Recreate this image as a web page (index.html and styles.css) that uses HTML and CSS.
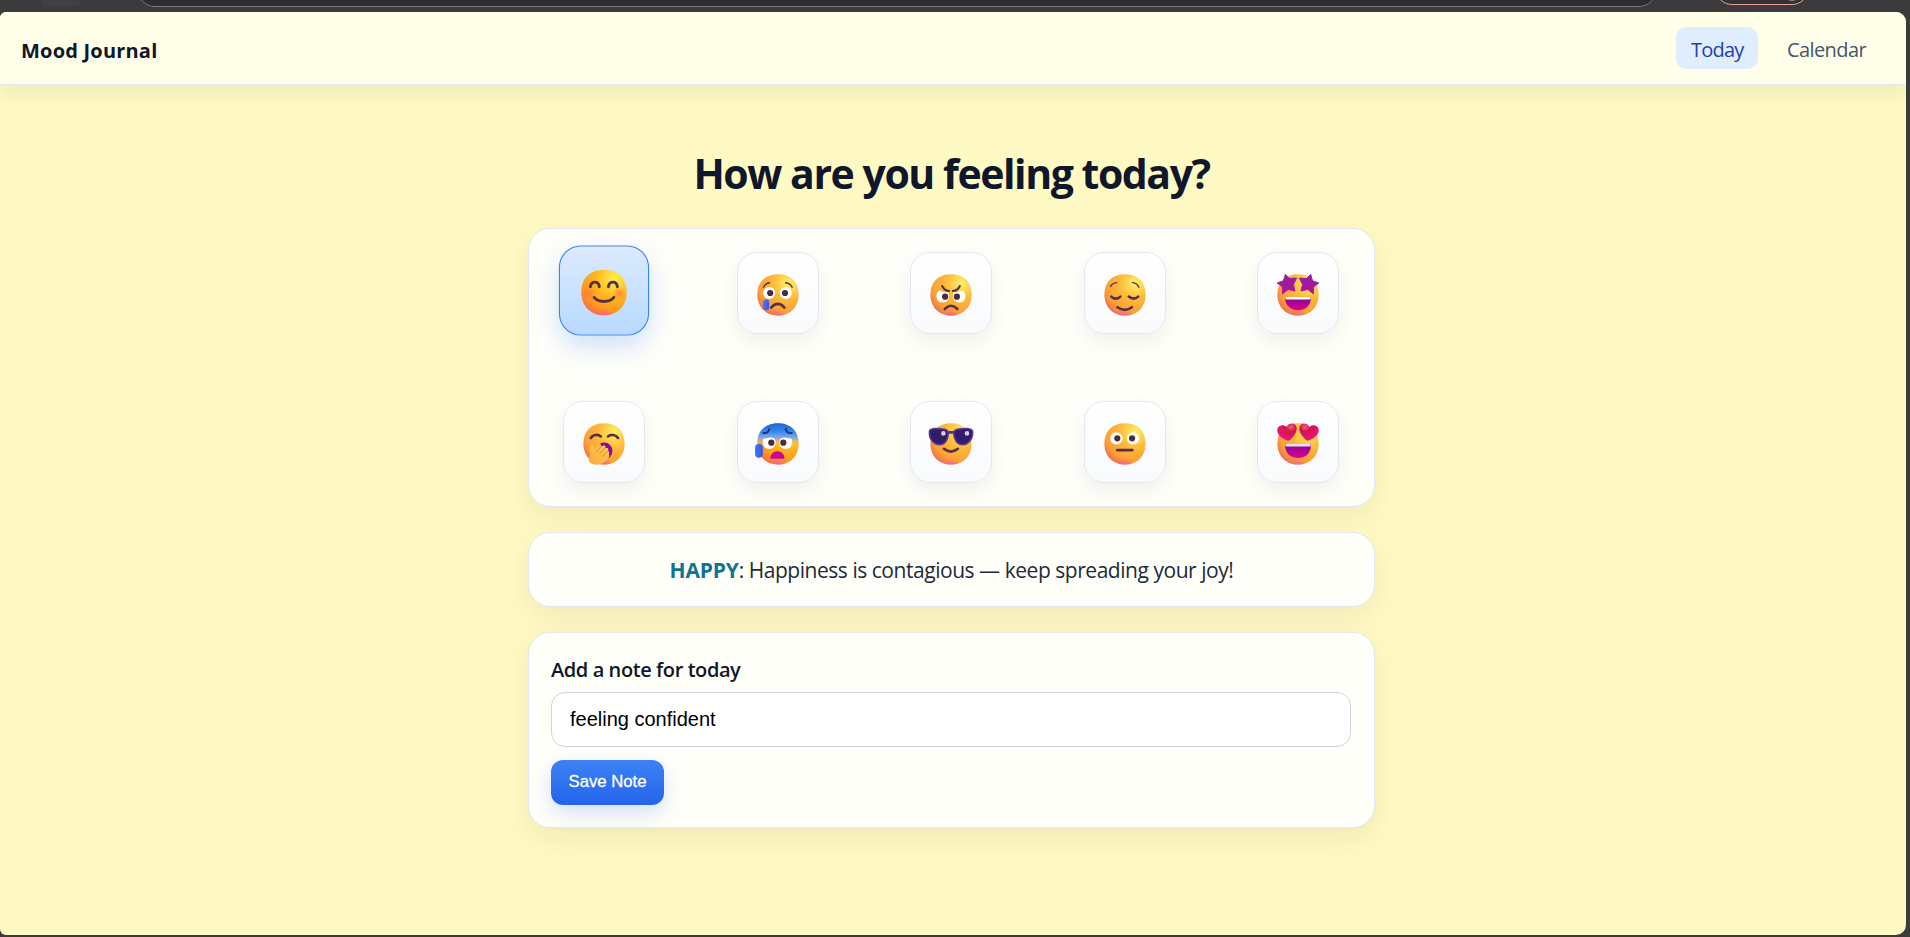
FILE: index.html
```html
<!DOCTYPE html>
<html lang="en">
<head>
<meta charset="utf-8">
<title>Mood Journal</title>
<link rel="stylesheet" href="styles.css">
</head>
<body>
<svg class="defs" width="0" height="0" aria-hidden="true">
  <defs>
    <radialGradient id="face" cx="0.75" cy="0.22" r="0.95"><stop offset="0" stop-color="#fff066"/><stop offset="0.4" stop-color="#fdb93a"/><stop offset="0.75" stop-color="#fb9f35"/><stop offset="1" stop-color="#e5605a"/></radialGradient>
    <radialGradient id="warm" cx="0.72" cy="0.2" r="0.95"><stop offset="0" stop-color="#fff04f"/><stop offset="0.45" stop-color="#ffb41c"/><stop offset="0.75" stop-color="#ff961f"/><stop offset="1" stop-color="#fa5c50"/></radialGradient>
    <radialGradient id="glow" cx="0.48" cy="1.08" r="0.25"><stop offset="0" stop-color="#f854b4" stop-opacity="0.9"/><stop offset="1" stop-color="#f854b4" stop-opacity="0"/></radialGradient>
    <radialGradient id="blush"><stop offset="0" stop-color="#ff6a45" stop-opacity="0.65"/><stop offset="1" stop-color="#ff6a45" stop-opacity="0"/></radialGradient>
    <linearGradient id="cold" x1="0" y1="0" x2="0" y2="1"><stop offset="0" stop-color="#1a66d6"/><stop offset="0.22" stop-color="#3a8bf2"/><stop offset="0.36" stop-color="#8aa8ea"/><stop offset="0.5" stop-color="#ffc04a" stop-opacity="0.3"/><stop offset="0.6" stop-color="#ffc04a" stop-opacity="0"/></linearGradient>
    <linearGradient id="star" x1="0" y1="0" x2="0" y2="1"><stop offset="0" stop-color="#8c1fa8"/><stop offset="1" stop-color="#b8129c"/></linearGradient>
    <linearGradient id="mouth" x1="0" y1="0" x2="0" y2="1"><stop offset="0" stop-color="#7d069a"/><stop offset="1" stop-color="#e6008c"/></linearGradient>
    <linearGradient id="tear" x1="0" y1="0" x2="1" y2="0"><stop offset="0" stop-color="#4a78f5"/><stop offset="1" stop-color="#2f55e8"/></linearGradient>
    <radialGradient id="heart" cx="0.7" cy="0.2" r="0.9"><stop offset="0" stop-color="#f2607c"/><stop offset="0.3" stop-color="#d0164e"/><stop offset="1" stop-color="#f5128a"/></radialGradient>
    <linearGradient id="hand" x1="1" y1="0" x2="0" y2="1"><stop offset="0" stop-color="#ffd050"/><stop offset="1" stop-color="#fba83e"/></linearGradient>
    <path id="head" d="M21 0.2C34 0.2 41.6 8 41.6 20.6C41.6 33.5 33 41.6 21 41.6C9 41.6 0.4 33.5 0.4 20.6C0.4 8 8 0.2 21 0.2Z"/>
  </defs>
</svg>

<div class="browser-bar">
  <div class="tab-hint"></div>
  <div class="address"></div>
  <div class="profile"><span class="avatar"></span></div>
</div>

<div class="page">
  <header class="header">
    <div class="brand">Mood Journal</div>
    <nav class="nav">
      <a class="link active">Today</a>
      <a class="link">Calendar</a>
    </nav>
  </header>

  <main class="main">
    <h1 class="title">How are you feeling today?</h1>

    <section class="card moods">
      <button class="mood selected" aria-label="Happy">
        <svg class="emoji" viewBox="0 0 42 42">
          <use href="#head" fill="url(#warm)"/><use href="#head" fill="url(#glow)"/>
          <circle cx="6.7" cy="21.5" r="6" fill="url(#blush)"/><circle cx="34.8" cy="21.5" r="6" fill="url(#blush)"/>
          <g class="ink"><path d="M8.6 15.6C9.4 10 16 10 16.8 15.6M25 15.6C25.8 10 32.4 10 33.2 15.6"/><path d="M12 25.2C16 30.2 26 30.2 30 25.2"/></g>
        </svg>
      </button>
      <button class="mood" aria-label="Sad">
        <svg class="emoji" viewBox="0 0 42 42">
          <use href="#head" fill="url(#face)"/><use href="#head" fill="url(#glow)"/>
          <circle cx="12.2" cy="19" r="6.1" fill="#fff"/><circle cx="28.8" cy="19" r="6.1" fill="#fff"/>
          <circle cx="13.2" cy="19" r="3.1" fill="#4a2b3c"/><circle cx="28" cy="19" r="3.1" fill="#4a2b3c"/>
          <g class="ink"><path class="thin" d="M6.5 13.2Q8.3 9.4 12.6 8.8M28.6 8.8Q33.3 9.4 35.2 13.2"/><path d="M14.2 33.6Q20.8 26.2 27.4 33.6"/></g>
          <rect x="6" y="25.4" width="6.2" height="10.8" rx="3" fill="url(#tear)"/>
        </svg>
      </button>
      <button class="mood" aria-label="Angry">
        <svg class="emoji" viewBox="0 0 42 42">
          <use href="#head" fill="url(#face)"/><use href="#head" fill="url(#glow)"/>
          <path d="M9.5 16.4C4.5 19 5.6 28.6 12.8 28.6C18 28.6 19.8 23.5 18.8 18.2C14.5 18.8 12.5 17.5 9.5 16.4ZM32.5 16.4C37.5 19 36.4 28.6 29.2 28.6C24 28.6 22.2 23.5 23.2 18.2C27.5 18.8 29.5 17.5 32.5 16.4Z" fill="#fff"/>
          <circle cx="15.1" cy="22.7" r="3.1" fill="#4a2b3c"/><circle cx="26.9" cy="22.7" r="3.1" fill="#4a2b3c"/>
          <g class="ink"><path class="mid" d="M12.2 12Q14.2 16.8 19.2 17M29.8 12Q27.8 16.8 22.8 17"/><path d="M14.8 35Q21 28.6 27.4 35"/></g>
        </svg>
      </button>
      <button class="mood" aria-label="Calm">
        <svg class="emoji" viewBox="0 0 42 42">
          <use href="#head" fill="url(#face)"/><use href="#head" fill="url(#glow)"/>
          <g class="ink"><path class="thin" d="M6.6 12.4Q8.4 9 12.8 8.6M28.5 8.6Q33.3 9.2 34.8 13.2"/><path d="M7.2 22.6Q11.8 26.8 16.4 22.6M24.8 22.6Q29.6 26.8 34.2 22.6"/><path d="M13.4 33.2Q20.8 38.4 28 33.2"/></g>
        </svg>
      </button>
      <button class="mood" aria-label="Excited">
        <svg class="emoji" viewBox="0 0 42 42">
          <use href="#head" fill="url(#face)"/><use href="#head" fill="url(#glow)"/>
          <path id="starshape" d="M8.3 0.4L12.4 4.5L19.6 4L16.4 10.5L18 17L11.2 15.4L5.6 19.8L5.4 12.8L0.2 9L6.6 6.8Z" fill="url(#star)" stroke="url(#star)" stroke-linejoin="round"/>
          <use href="#starshape" transform="translate(42 0) scale(-1 1)"/>
          <path d="M8 23H34C34.2 31 29 36.2 21 36.2C13 36.2 7.8 31 8 23Z" fill="url(#mouth)"/><path d="M8.4 23H33.6V24.2Q33.6 25.4 32.4 25.4H9.6Q8.4 25.4 8.4 24.2Z" fill="#fff"/>
        </svg>
      </button>
      <button class="mood" aria-label="Tired">
        <svg class="emoji" viewBox="0 0 42 42">
          <use href="#head" fill="url(#face)"/><use href="#head" fill="url(#glow)"/>
          <g class="ink"><path d="M7.8 15C9.8 11.4 15 11 17.8 13.4M25 13.4C27.8 11 33 11.4 35 15"/></g>
          <ellipse cx="21.4" cy="28" rx="8" ry="8.4" fill="#8a0a9c"/>
          <path d="M7.2 31C6 27 7 22 9.2 21.8C10.8 21.7 11.3 24 11.2 26L16 21.6C17.4 20.4 19 22 18 23.4L20.2 22.6C22 21.8 23.4 23.6 22.2 25L23.8 25C25.6 25 26 27 24.8 28.2C26.8 28.2 26.8 30 25.6 31.2L26.4 32C27 34 22 40 16 41.5C10 42.2 5.4 40.5 5.6 35.5Z" fill="url(#hand)"/>
          <path d="M18 23.4L13.5 28.6M22.2 25L16.5 30.8M24.8 28.2L19.3 33.2" stroke="#dd7a2c" stroke-width="0.9" fill="none" stroke-linecap="round"/>
        </svg>
      </button>
      <button class="mood" aria-label="Anxious">
        <svg class="emoji" viewBox="0 0 42 42">
          <use href="#head" fill="url(#warm)"/><use href="#head" fill="url(#glow)"/><use href="#head" fill="url(#cold)"/>
          <path d="M6.2 16C4.8 23 8 26 12.2 26C17 26 19.6 22 18.3 17.5C16.5 13 11 14.8 6.2 16ZM34.8 16C36.2 23 33 26 28.8 26C24 26 21.4 22 22.7 17.5C24.5 13 30 14.8 34.8 16Z" fill="#fff"/>
          <circle cx="14.3" cy="19.7" r="3.1" fill="#4a2b3c"/><circle cx="26.3" cy="19.7" r="3.1" fill="#4a2b3c"/>
          <g class="cold-brow"><path d="M6.2 10Q11.3 10.8 12.4 5.8M34.8 10Q29.7 10.8 28.6 5.8"/></g>
          <path d="M13.3 35.8C13.3 25.8 27.5 25.8 27.5 35.8Z" fill="#cf0394"/>
          <rect x="-2" y="21" width="7.8" height="13.8" rx="3.7" fill="url(#tear)"/>
        </svg>
      </button>
      <button class="mood" aria-label="Confident">
        <svg class="emoji" viewBox="0 0 42 42">
          <use href="#head" fill="url(#face)"/><use href="#head" fill="url(#glow)"/>
          <path d="M17 8H25V10.8H17Z" fill="#503585"/>
          <path d="M-0.6 8.5C-0.4 4.9 8 4.8 15 6.3C18.4 7.2 18.8 9.5 18 13.3C16.8 18.6 14.2 21.7 9.6 21.7C3.2 21.7 -1.2 15.7 -0.6 8.5ZM42.6 8.5C42.4 4.9 34 4.8 27 6.3C23.6 7.2 23.2 9.5 24 13.3C25.2 18.6 27.8 21.7 32.4 21.7C38.8 21.7 43.2 15.7 42.6 8.5Z" fill="#321c69" stroke="#583f93" stroke-width="1.5"/>
          <circle cx="13.4" cy="10.4" r="2.3" fill="#d6cbea"/><circle cx="37" cy="10.4" r="2.3" fill="#d6cbea"/>
          <g class="ink"><path d="M13.9 25.8Q21 31.4 27.9 25.8"/></g>
        </svg>
      </button>
      <button class="mood" aria-label="Neutral">
        <svg class="emoji" viewBox="0 0 42 42">
          <use href="#head" fill="url(#face)"/><use href="#head" fill="url(#glow)"/>
          <circle cx="12.4" cy="15.4" r="6.1" fill="#fff"/><circle cx="29" cy="15.4" r="6.1" fill="#fff"/>
          <circle cx="13.3" cy="15.3" r="3.1" fill="#4a2b3c"/><circle cx="28.1" cy="15.3" r="3.1" fill="#4a2b3c"/>
          <g class="ink"><path d="M13.2 27.1H28.4"/></g>
        </svg>
      </button>
      <button class="mood" aria-label="Loved">
        <svg class="emoji" viewBox="0 0 42 42">
          <use href="#head" fill="url(#face)"/><use href="#head" fill="url(#glow)"/>
          <path id="heartshape" d="M11.6 17.8C6 16.6 0.6 12.8 0.2 7.6C0 3 6 0.4 9.6 4C11.6 -0.8 18.6 -0.6 19.6 4.2C20.6 9 16 15 11.6 17.8Z" fill="url(#heart)"/>
          <use href="#heartshape" transform="translate(42 0) scale(-1 1)"/>
          <path d="M8 21H34C34.2 30 29 35 21 35C13 35 7.8 30 8 21Z" fill="url(#mouth)"/><path d="M8.4 21H33.6V22.4Q33.6 23.6 32.4 23.6H9.6Q8.4 23.6 8.4 22.4Z" fill="#f3dff8"/>
        </svg>
      </button>
    </section>

    <section class="card message"><p class="quote"><strong>HAPPY</strong>: Happiness is contagious — keep spreading your joy!</p></section>

    <section class="card note">
      <label class="label" for="note">Add a note for today</label>
      <input class="field" id="note" type="text" value="feeling confident">
      <button class="save">Save Note</button>
    </section>
  </main>
</div>
</body>
</html>
```
FILE: styles.css
```css
* { box-sizing: border-box; }
body {
  margin: 0;
  height: 937px;
  overflow: hidden;
  background: #3b3b3b;
  font-family: "Open Sans", "Noto Sans", sans-serif;
  color: #0f172a;
  display: flex;
  flex-direction: column;
}
.defs { position: absolute; }

.browser-bar {
  flex: none;
  height: 12px;
  display: flex;
  align-items: flex-end;
  overflow: hidden;
  padding-left: 41px;
}
.tab-hint { width: 40px; height: 12px; margin-bottom: 5px; border-radius: 4px; background: #404040; }
.address {
  width: 1520px;
  height: 36px;
  margin: 0 0 5px 56px;
  border: 1px solid #777;
  border-radius: 18px;
  background: #2d2d2d;
}
.profile {
  width: 94px;
  height: 34px;
  margin: 0 0 7px 58px;
  border: 1px solid #f0a09c;
  border-radius: 17px;
  background: #323232;
  display: flex;
  align-items: flex-end;
  justify-content: flex-end;
  padding: 0 9px 3px;
}
.avatar { width: 14px; height: 14px; border-radius: 50%; background: #888; }

.page {
  flex: none;
  width: 1906px;
  height: 923px;
  overflow: hidden;
  border-radius: 6px 10px 10px 6px;
  background: #fff9c3;
}
.header {
  height: 73px;
  padding: 0 25px 0 21px;
  display: flex;
  align-items: center;
  justify-content: space-between;
  background: #fffee9;
  border-bottom: 1px solid #e2e8f0;
  box-shadow: 0 8px 24px rgba(15, 23, 42, 0.07);
}
.brand { padding-top: 4px; font-size: 20px; font-weight: 700; letter-spacing: 0.2px; }
.nav { display: flex; gap: 14px; }
.link {
  height: 42px;
  padding: 2px 15px 0;
  border-radius: 10px;
  font-size: 20px;
  line-height: 42px;
  letter-spacing: -0.6px;
  color: #475569;
}
.link.active { width: 82px; letter-spacing: -0.8px; background: #e0edff; color: #1e40af; }

.main {
  width: 847px;
  margin: 0 0 0 528px;
  padding-top: 60px;
  display: flex;
  flex-direction: column;
}
.title {
  margin: 0 0 27px;
  font-size: 41px;
  line-height: 56px;
  font-weight: 700;
  letter-spacing: -1.45px;
  text-align: center;
}
.card {
  background: #fffff9;
  border: 1px solid #e2e8f0;
  border-radius: 22px;
  box-shadow: 0 10px 30px rgba(15, 23, 42, 0.07);
}
.moods {
  height: 279px;
  padding: 23px 35px 23px 34px;
  display: grid;
  grid-template-columns: repeat(5, 82px);
  grid-auto-rows: 82px;
  justify-content: space-between;
  row-gap: 67px;
}
.mood {
  padding: 4px 0 0;
  border: 1px solid #e2e8f0;
  border-radius: 20px;
  background: linear-gradient(#ffffff, #f8fafc);
  box-shadow: 0 8px 20px rgba(15, 23, 42, 0.06);
  display: flex;
  align-items: center;
  justify-content: center;
}
.mood.selected {
  border-color: #3b82f6;
  background: linear-gradient(#dbeafe, #b8daff);
  box-shadow: 0 10px 24px rgba(59, 130, 246, 0.25);
  transform: translateY(-2.5px) scale(1.1);
}
.emoji { width: 42px; height: 42px; overflow: visible; }
.ink path { fill: none; stroke: #56304a; stroke-width: 2.6; stroke-linecap: round; }
.ink .thin { stroke-width: 1.4; }
.ink .mid { stroke-width: 2; }
.cold-brow path { fill: none; stroke: #24356e; stroke-width: 1.9; stroke-linecap: round; }

.message { height: 75px; margin-top: 25px; display: flex; align-items: center; justify-content: center; }
.quote { margin: 0; padding-top: 1px; font-size: 21px; letter-spacing: -0.46px; color: #1f2937; white-space: nowrap; }
.quote strong { letter-spacing: -0.2px; color: #0e7490; }

.note {
  height: 196px;
  margin-top: 25px;
  padding: 22px 23px 22px 22px;
  display: flex;
  flex-direction: column;
  align-items: flex-start;
}
.label { font-size: 20px; line-height: 30px; font-weight: 600; letter-spacing: -0.42px; }
.field {
  width: 800px;
  height: 55px;
  margin-top: 7px;
  padding: 0 18px;
  border: 1px solid #cbd5e1;
  border-radius: 14px;
  background: #fff;
  font: 20px "Liberation Sans", Arial, sans-serif;
  color: #000;
}
.save {
  width: 113px;
  height: 45px;
  margin-top: 13px;
  padding: 0 0 2px;
  border: 0;
  border-radius: 12px;
  background: linear-gradient(#3b82f6, #2563eb);
  box-shadow: 0 8px 20px rgba(37, 99, 235, 0.2);
  color: #fff;
  font: 16.7px "Liberation Sans", Arial, sans-serif;
  -webkit-text-stroke: 0.3px #fff;
}
```
